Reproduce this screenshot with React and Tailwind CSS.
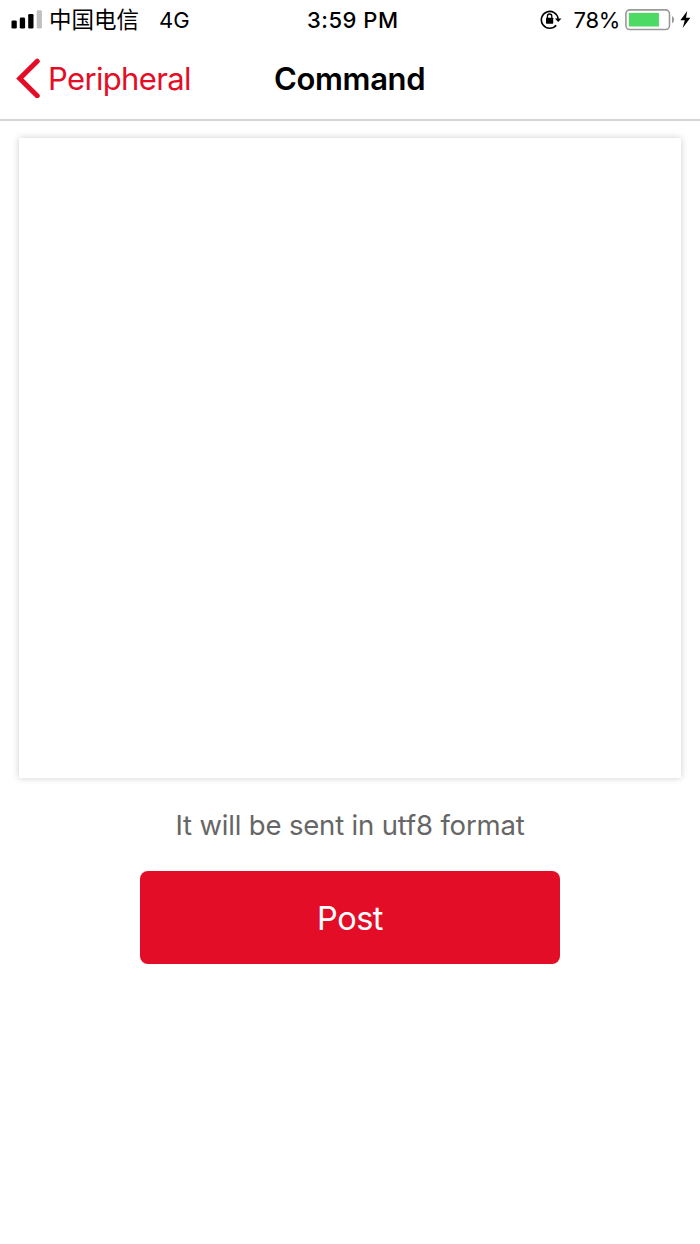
import React from 'react';

function SignalIcon() {
  return (
    <svg className="w-[31px] h-[20px] shrink-0" viewBox="0 0 31 20">
      <rect x="0.5" y="10.4" width="5.3" height="8.2" rx="1.4" fill="#000" />
      <rect x="8.8" y="7.6" width="5.3" height="11" rx="1.4" fill="#000" />
      <rect x="17.2" y="3.9" width="5.3" height="14.7" rx="1.4" fill="#000" />
      <rect x="25.7" y="0.3" width="5.2" height="18.3" rx="1.4" fill="#bfbfbf" />
    </svg>
  );
}

function RotationLockIcon() {
  return (
    <svg className="w-[22px] h-[20px] shrink-0" viewBox="0 0 22 20" fill="none">
      <path d="M16.2 15.2 A8.4 8.4 0 1 1 18.1 8.9" stroke="#000" strokeWidth="1.6" />
      <path d="M14.9 8.5 H21.5 L18.2 12 Z" fill="#000" />
      <rect x="6" y="7.7" width="7.2" height="6" rx="0.6" fill="#000" />
      <path d="M7.4 8.1 V6.2 A2.2 2.2 0 0 1 11.8 6.2 V8.1" stroke="#000" strokeWidth="1.3" />
    </svg>
  );
}

function BatteryIcon() {
  return (
    <svg className="w-[50px] h-[22px] shrink-0" viewBox="0 0 50 22" fill="none">
      <rect x="0.9" y="0.9" width="43.6" height="19.6" rx="4" stroke="#999" strokeWidth="1.6" />
      <rect x="3.9" y="3.9" width="30" height="13.6" fill="#4cd964" />
      <path d="M47 7.1 C49.8 8.4 49.8 13 47 14.3 Z" fill="#999" />
    </svg>
  );
}

function BoltIcon() {
  return (
    <svg className="block w-[11px] h-[18px] shrink-0" viewBox="0 0 11 18">
      <path d="M7.2 0 L0.4 9.3 H4.8 L2.7 17 L10.4 6.8 H6 Z" fill="#000" />
    </svg>
  );
}

function StatusBar() {
  return (
    <div className="flex items-center h-10 pb-px text-[22px] leading-none">
      <div className="flex items-center w-[307px] pl-[11px]">
        <SignalIcon />
        <span className="ml-[7px] pt-px text-[22.5px] whitespace-nowrap">中国电信</span>
        <span className="ml-5 whitespace-nowrap">4G</span>
      </div>
      <span className="font-medium tracking-[0.5px] whitespace-nowrap">3:59 PM</span>
      <div className="flex items-center ml-auto pr-[9px]">
        <RotationLockIcon />
        <span className="ml-[11.5px] mr-[5px] tracking-[-0.3px] whitespace-nowrap">78%</span>
        <BatteryIcon />
        <span className="ml-[5px]">
          <BoltIcon />
        </span>
      </div>
    </div>
  );
}

function NavBar() {
  return (
    <div className="flex items-center h-[81px] pb-[3px] border-b-2 border-[#d5d5d5]">
      <button className="flex items-center w-[274px] pl-4 text-[#e40d28]">
        <svg className="w-6 h-10 shrink-0" viewBox="0 0 24 40" fill="none">
          <path d="M21.2 3.3 L3.8 20.5 L21.2 37.7" stroke="currentColor" strokeWidth="5.1" strokeLinecap="round" strokeLinejoin="miter" />
        </svg>
        <span className="ml-2 pt-px text-[31px] leading-none tracking-[-0.65px] whitespace-nowrap">
          Peripheral
        </span>
      </button>
      <h1 className="text-[31px] leading-none font-semibold tracking-[-0.35px] whitespace-nowrap">Command</h1>
    </div>
  );
}

function App() {
  return (
    <div className="min-h-[1244px] bg-white text-black font-['Inter','Noto_Sans_CJK_SC',sans-serif]">
      <header>
        <StatusBar />
        <NavBar />
      </header>

      <main className="flex flex-col items-center pt-[17px]">
        <textarea
          className="block w-[662px] h-[640px] p-4 resize-none outline-none bg-white text-[28px] shadow-[0_0_7px_rgba(0,0,0,0.2)]"
          aria-label="Command"
        />
        <p className="mt-[33px] text-[27.5px] leading-[28px] tracking-[-0.17px] text-[#666] whitespace-nowrap">
          It will be sent in utf8 format
        </p>
        <button className="flex items-center justify-center mt-8 w-[420px] h-[93px] pt-[3px] rounded-lg bg-[#e40d28] text-[32.5px] tracking-[-0.5px] text-white">
          Post
        </button>
      </main>
    </div>
  );
}

export default App;
